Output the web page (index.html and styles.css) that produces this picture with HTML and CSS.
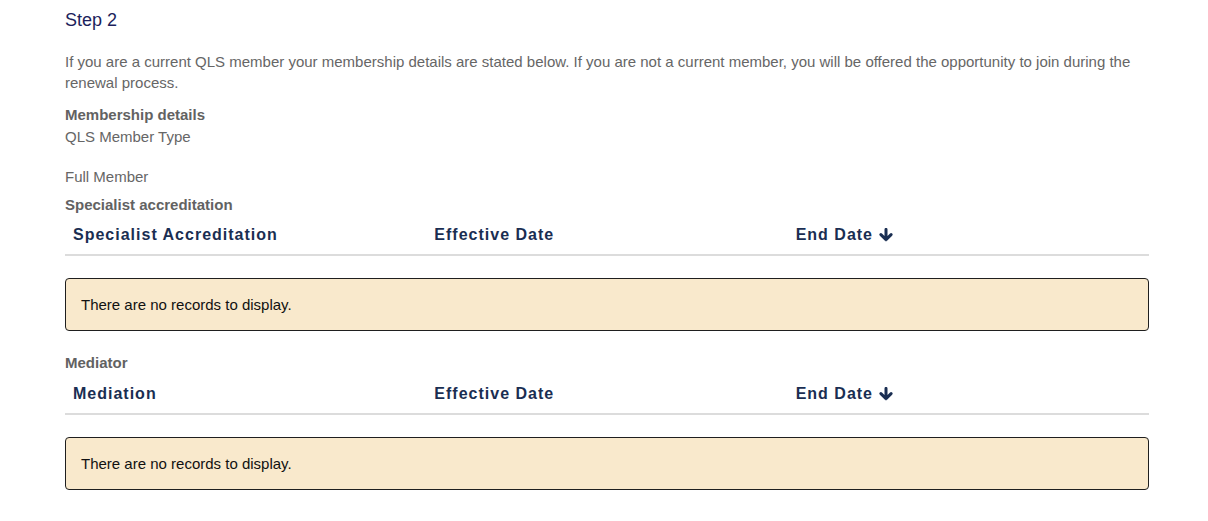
FILE: index.html
```html
<!DOCTYPE html>
<html lang="en">
<head>
<meta charset="utf-8">
<title>Step 2</title>
<link rel="stylesheet" href="styles.css">
</head>
<body>
<main class="page">
  <h2 class="step-title">Step 2</h2>
  <p class="intro">If you are a current QLS member your membership details are stated below. If you are not a current member, you will be offered the opportunity to join during the renewal process.</p>

  <div class="field-label">Membership details</div>
  <div class="field-sub">QLS Member Type</div>
  <div class="field-value">Full Member</div>

  <section class="grid-section">
    <div class="section-label">Specialist accreditation</div>
    <div class="grid-head">
      <div class="th">Specialist Accreditation</div>
      <div class="th">Effective Date</div>
      <div class="th">End Date <svg class="sort-icon" viewBox="0 0 14 14" width="14" height="14" aria-hidden="true"><path d="M7 1.4v10M1.9 6.6L7 11.6l5.1-5" fill="none" stroke="currentColor" stroke-width="3" stroke-linecap="round" stroke-linejoin="round"/></svg></div>
    </div>
    <div class="empty-msg">There are no records to display.</div>
  </section>

  <section class="grid-section">
    <div class="section-label">Mediator</div>
    <div class="grid-head">
      <div class="th">Mediation</div>
      <div class="th">Effective Date</div>
      <div class="th">End Date <svg class="sort-icon" viewBox="0 0 14 14" width="14" height="14" aria-hidden="true"><path d="M7 1.4v10M1.9 6.6L7 11.6l5.1-5" fill="none" stroke="currentColor" stroke-width="3" stroke-linecap="round" stroke-linejoin="round"/></svg></div>
    </div>
    <div class="empty-msg">There are no records to display.</div>
  </section>
</main>
</body>
</html>
```

FILE: styles.css
```css
html, body {
  margin: 0;
  padding: 0;
  background: #ffffff;
}

body {
  font-family: "Liberation Sans", Arial, sans-serif;
  color: #666666;
  font-size: 15px;
}

.page {
  width: 1084px;
  margin-left: 65px;
  padding-top: 9px;
}

.step-title {
  margin: 0;
  font-size: 18px;
  font-weight: normal;
  line-height: 22px;
  color: #1c1f5c;
}

.intro {
  margin: 20px 0 0;
  line-height: 21px;
  color: #666666;
}

.field-label {
  margin-top: 11px;
  font-weight: bold;
  line-height: 21px;
  color: #626262;
}

.field-sub {
  margin-top: 1px;
  line-height: 21px;
  color: #666666;
}

.field-value {
  margin-top: 19px;
  line-height: 21px;
  color: #666666;
}

.grid-section {
  display: flex;
  flex-direction: column;
}

.grid-section + .grid-section {
  margin-top: 21px;
}

.section-label {
  margin-top: 7px;
  font-weight: bold;
  line-height: 21px;
  color: #626262;
}

.grid-section + .grid-section .section-label {
  margin-top: 0;
  margin-bottom: 1px;
}

.grid-head {
  display: grid;
  grid-template-columns: 1fr 1fr 1fr;
  border-bottom: 2px solid #dcdcdc;
}

.th {
  padding: 9.5px 8px 9.5px;
  font-size: 16px;
  font-weight: bold;
  line-height: 20px;
  letter-spacing: 1px;
  color: #1a2e52;
  display: flex;
  align-items: center;
  gap: 6px;
}

.sort-icon {
  color: #1a2e52;
  flex: none;
  margin-top: 1px;
}

.empty-msg {
  margin-top: 22px;
  padding: 16px 15px;
  line-height: 19px;
  min-height: 19px;
  background: #f9e9cc;
  border: 1px solid #1f1f1f;
  border-radius: 4px;
  color: #111111;
  font-size: 15px;
}
```
